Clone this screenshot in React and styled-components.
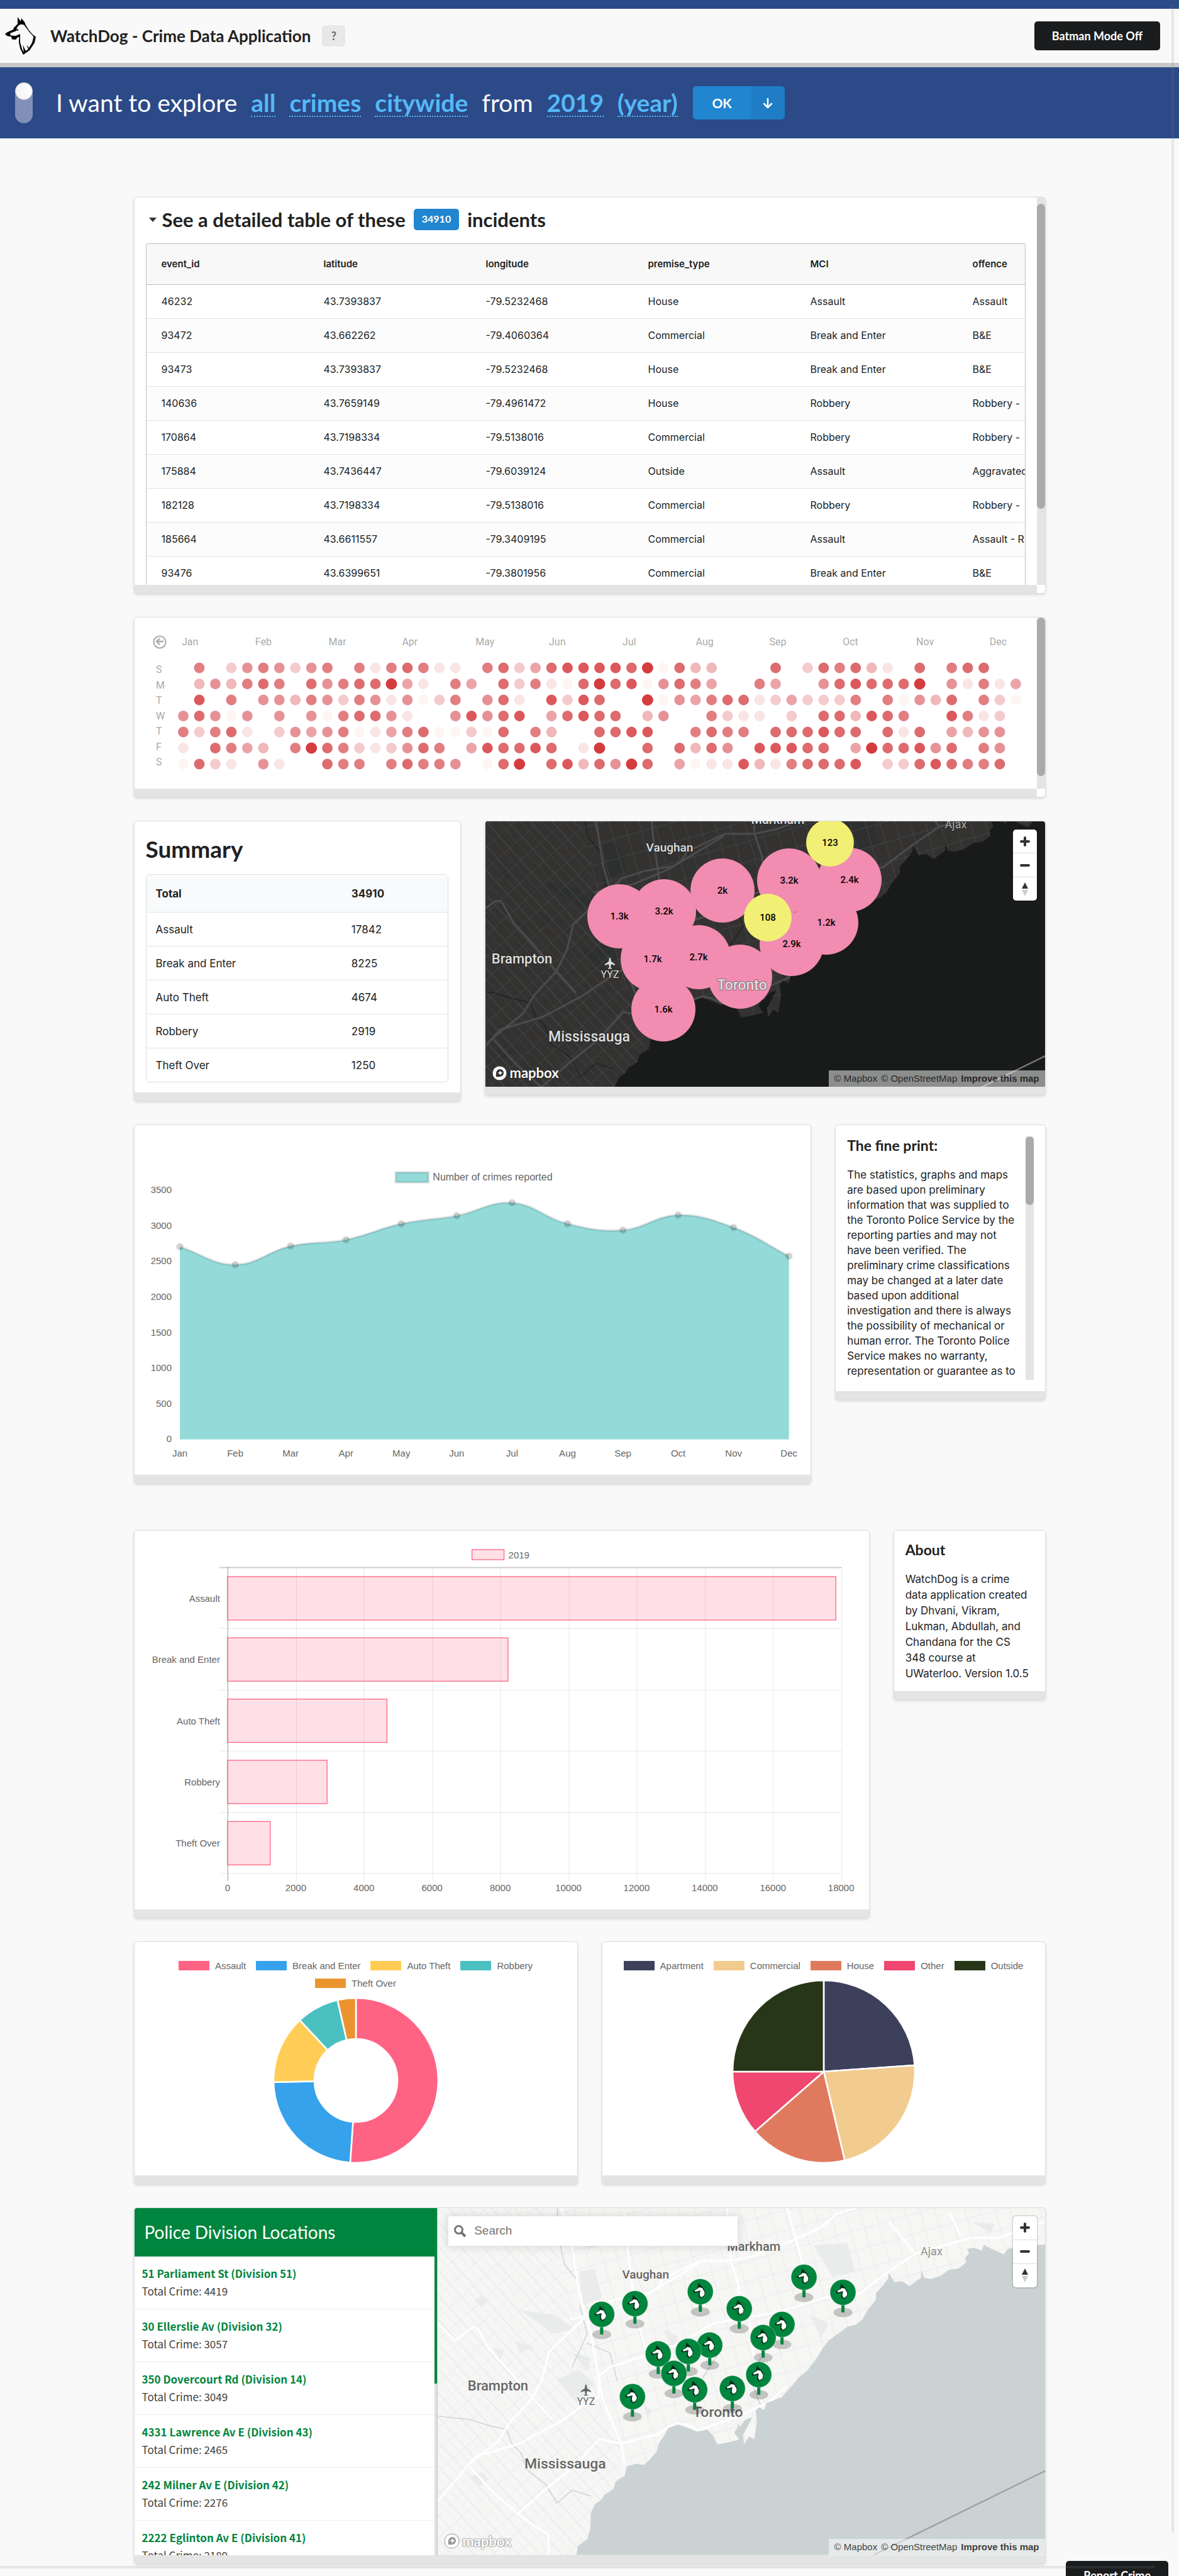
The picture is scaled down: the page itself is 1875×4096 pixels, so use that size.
import React from "react";
import styled, { createGlobalStyle, css } from "styled-components";

const LATO = `Lato, "Open Sans", sans-serif`;
const UI = `Inter, Roboto, sans-serif`;
const CHART = `"Liberation Sans", Arial, sans-serif`;
const MAP = `Roboto, "Noto Sans", sans-serif`;
const SOURCE = `"Noto Sans CJK SC", "Noto Sans", sans-serif`;

const GlobalStyle = createGlobalStyle`
  *, *::before, *::after { box-sizing: border-box; }
  body {
    margin: 0;
    background: #f9f9f9;
    color: #212121;
    font-family: ${LATO};
    font-size: 18px;
    overflow: hidden;
  }
  button, input { font-family: inherit; }
  h1, h2, h3, p, ul { margin: 0; padding: 0; }
`;

/* ---------- page chrome ---------- */

const Page = styled.div`
  position: relative;
  min-height: 100vh;
`;

const TopStrip = styled.div`
  height: 14px;
  background: #2b4a87;
`;

const Header = styled.header`
  display: flex;
  align-items: center;
  justify-content: space-between;
  height: 93px;
  padding: 0 30px 0 8px;
  border-bottom: 7px solid #c8c8c8;
`;

const Brand = styled.div`
  display: flex;
  align-items: center;
`;

const BrandName = styled.h1`
  margin: 0 18px 0 23px;
  font-size: 26px;
  line-height: 34px;
  font-weight: 700;
`;

const HelpButton = styled.button`
  width: 37px;
  height: 34px;
  border: 0;
  border-radius: 5px;
  background: #e8e8e8;
  color: #666;
  font-size: 18px;
  font-weight: 700;
`;

const DarkButton = styled.button`
  height: ${(p) => p.$height}px;
  padding: 0 28px;
  border: 0;
  border-radius: 5px;
  background: #1b1c1d;
  color: #fff;
  font-size: 18px;
  font-weight: 700;
`;

const QueryBar = styled.section`
  display: flex;
  align-items: center;
  height: 113px;
  padding: 0 24px;
  background: #2b4a87;
  color: #fff;
`;

const Toggle = styled.label`
  display: block;
  width: 28px;
  height: 65px;
  margin-right: 37px;
  border-radius: 14px;
  background: #8090b7;

  input {
    appearance: none;
    display: block;
    width: 28px;
    height: 28px;
    margin: 0;
    border-radius: 14px;
    border: 1px solid #d0d0d4;
    background: linear-gradient(90deg, #f2f2f2, #fff);
  }
`;

const Sentence = styled.p`
  display: flex;
  align-items: baseline;
  gap: 22px;
  font-size: 39px;
  line-height: 42px;
`;

const Choice = styled.button`
  padding: 0;
  border: 0;
  border-bottom: 2px dotted #54b9f8;
  background: none;
  color: #54b9f8;
  font-size: 39px;
  line-height: 42px;
  font-weight: 700;
`;

const SplitButton = styled.div`
  display: flex;
  height: 53px;
  margin-left: 24px;
  border-radius: 5px;
  overflow: hidden;

  button {
    display: flex;
    align-items: center;
    justify-content: center;
    width: 93px;
    padding: 0;
    border: 0;
    background: #2185d0;
    color: #fff;
    font-size: 21px;
    font-weight: 700;
  }
  button + button {
    width: 53px;
    background: #1e7dc4;
  }
`;

const Main = styled.main`
  display: flex;
  flex-direction: column;
  gap: 37px;
  max-width: 1450px;
  margin: 93px auto 0;
`;

const Row = styled.div`
  display: grid;
  grid-template-columns: ${(p) => p.$cols};
  gap: 38px;
  align-items: start;
  margin-bottom: ${(p) => p.$after || 0}px;
`;

/* ---------- cards ---------- */

const CardBox = styled.section`
  border: 1px solid #dedede;
  border-radius: 5px;
  background: #fff;
  box-shadow: 0 2px 4px rgba(34, 36, 38, 0.14);
  overflow: hidden;
`;

const CardBand = styled.div`
  height: 13px;
  margin-right: ${(p) => (p.$corner ? 13 : 0)}px;
  background: #e4e4e4;
`;

const ScrollFrame = styled.div`
  display: grid;
  grid-template-columns: minmax(0, 1fr) 13px;
`;

const Track = styled.div`
  padding-top: ${(p) => p.$offset || 0}px;
  background: #e4e4e4;
`;

const Thumb = styled.div`
  height: ${(p) => p.$length}px;
  border-radius: 7px;
  background: #aaa;
`;

function Card({ children, corner }) {
  return (
    <CardBox>
      {children}
      <CardBand $corner={corner} />
    </CardBox>
  );
}

/* ---------- incidents table ---------- */

const IncidentsPane = styled.div`
  height: 616px;
  padding: 18px 18px 0;
  overflow: hidden;
`;

const IncidentsTitle = styled.h2`
  display: flex;
  align-items: center;
  height: 34px;
  margin-bottom: 21px;
  padding-left: 5px;
  font-size: 31px;
  line-height: 34px;
  font-weight: 700;
`;

const Caret = styled.span`
  width: 0;
  height: 0;
  margin-right: 9px;
  border: 6px solid transparent;
  border-top: 7px solid #333;
  border-bottom: 0;
`;

const Badge = styled.span`
  height: 34px;
  margin: 0 13px;
  padding: 0 13px;
  border-radius: 5px;
  background: #2185d0;
  color: #fff;
  font-size: 16px;
  line-height: 32px;
`;

const GridFrame = styled.div`
  border: 1px solid #babfc7;
  border-bottom: 0;
  border-radius: 3px 3px 0 0;
  overflow: hidden;
`;

const DataTable = styled.table`
  width: 1548px;
  table-layout: fixed;
  border-collapse: collapse;
  color: #181d1f;
  font-family: ${UI};
  font-size: 16px;
  white-space: nowrap;

  th, td {
    padding: 0 24px;
    text-align: left;
    border-bottom: 1px solid #dde2eb;
  }
  th {
    height: 64px;
    background: #f8f8f8;
    border-color: #babfc7;
    font-size: 15px;
    font-weight: 600;
  }
  td { height: 54px; }
  tbody tr:nth-child(even) { background: #fcfcfc; }
`;

const COLUMNS = ["event_id", "latitude", "longitude", "premise_type", "MCI", "offence"];
const INCIDENTS = [
  ["46232", "43.7393837", "-79.5232468", "House", "Assault", "Assault"],
  ["93472", "43.662262", "-79.4060364", "Commercial", "Break and Enter", "B&E"],
  ["93473", "43.7393837", "-79.5232468", "House", "Break and Enter", "B&E"],
  ["140636", "43.7659149", "-79.4961472", "House", "Robbery", "Robbery -"],
  ["170864", "43.7198334", "-79.5138016", "Commercial", "Robbery", "Robbery -"],
  ["175884", "43.7436447", "-79.6039124", "Outside", "Assault", "Aggravated"],
  ["182128", "43.7198334", "-79.5138016", "Commercial", "Robbery", "Robbery -"],
  ["185664", "43.6611557", "-79.3409195", "Commercial", "Assault", "Assault - R"],
  ["93476", "43.6399651", "-79.3801956", "Commercial", "Break and Enter", "B&E"],
];

function IncidentsCard() {
  return (
    <Card corner>
      <ScrollFrame>
        <IncidentsPane>
          <IncidentsTitle>
            <Caret />
            See a detailed table of these
            <Badge>34910</Badge>
            incidents
          </IncidentsTitle>
          <GridFrame>
            <DataTable>
              <thead>
                <tr>{COLUMNS.map((c) => <th key={c} scope="col">{c}</th>)}</tr>
              </thead>
              <tbody>
                {INCIDENTS.map((row) => (
                  <tr key={row[0]}>{row.map((cell, i) => <td key={i}>{cell}</td>)}</tr>
                ))}
              </tbody>
            </DataTable>
          </GridFrame>
        </IncidentsPane>
        <Track $offset={10}><Thumb $length={485} /></Track>
      </ScrollFrame>
    </Card>
  );
}

/* ---------- calendar heat map ---------- */

const Drawing = styled.svg`
  display: block;
  width: 100%;
  height: auto;
`;

const MONTHS = ["Jan", "Feb", "Mar", "Apr", "May", "Jun", "Jul", "Aug", "Sep", "Oct", "Nov", "Dec"];

/* One string per weekday, one digit per week: 0 is empty, a is the busiest day. */
const HEAT = [
  ["S", "0703676367" + "0727872207" + "835899998a" + "1844000803" + "8784208078" + "800"],
  ["M", "0464787086" + "788a520750" + "837218a891" + "6875007500" + "689888a062" + "725"],
  ["T", "0907066476" + "3762613706" + "820939800a" + "1657882353" + "3370716480" + "731"],
  ["W", "6861606061" + "7886200696" + "8905898804" + "6007322030" + "8849870097" + "230"],
  ["T", "7378203656" + "7125781131" + "8074008899" + "0078770888" + "9880828054" + "660"],
  ["F", "20875407a8" + "7323687059" + "889802a008" + "0848609998" + "805a889680" + "760"],
  ["S", "1832062008" + "7707877601" + "8a089486a8" + "0512294278" + "8890338987" + "780"],
];
const SHADES = {
  1: "#fdf4f4", 2: "#f9e5e6", 3: "#f3cbcd", 4: "#efb8bb", 5: "#eaa4a7",
  6: "#e69295", 7: "#e27e81", 8: "#de6b6e", 9: "#db585c", a: "#d53c40",
};

function CalendarCard() {
  return (
    <Card corner>
      <ScrollFrame>
        <Drawing viewBox="0 0 1435 272" role="img" aria-label="Crimes per day">
          <g fill="none" stroke="#aaa" strokeWidth="2">
            <circle cx="40" cy="39" r="9.5" />
            <path d="M46 38H35M40 33l-5 5 5 5" strokeWidth="2.4" />
          </g>
          <g fill="#aaa" fontFamily={MAP} fontSize="16">
            {MONTHS.map((m, i) => <text key={m} x={75 + i * 116.8} y="44">{m}</text>)}
            {HEAT.map(([day], i) => <text key={i} x="34" y={88 + i * 24.5}>{day}</text>)}
          </g>
          {HEAT.map(([, weeks], row) =>
            weeks.split("").map((v, col) =>
              v === "0" ? null : (
                <circle
                  key={`${row}-${col}`}
                  cx={77.5 + col * 25.46}
                  cy={80 + row * 25.5}
                  r={v === "a" ? 9 : 8.4}
                  fill={SHADES[v]}
                />
              )
            )
          )}
        </Drawing>
        <Track><Thumb $length={252} /></Track>
      </ScrollFrame>
    </Card>
  );
}

/* ---------- summary ---------- */

const SummaryPane = styled.div`
  padding: 24px 19px 16px 18px;

  h2 {
    margin-bottom: 20px;
    font-size: 37px;
    line-height: 40px;
  }
`;

const SummaryTable = styled.table`
  width: 100%;
  border: 1px solid #dedfdf;
  border-radius: 5px;
  border-spacing: 0;
  font-family: ${UI};
  font-size: 17px;
  overflow: hidden;

  th, td {
    height: 54px;
    padding: 0 15px;
    text-align: left;
    border-top: 1px solid #e4e4e5;
  }
  th:first-child { width: 65%; }
  td:first-child { width: 65%; }
  thead th {
    height: 59px;
    border-top: 0;
    background: #f9fafb;
    font-weight: 700;
  }
`;

const TOTALS = [["Assault", 17842], ["Break and Enter", 8225], ["Auto Theft", 4674], ["Robbery", 2919], ["Theft Over", 1250]];

function SummaryCard() {
  return (
    <Card>
      <SummaryPane>
        <h2>Summary</h2>
        <SummaryTable>
          <thead>
            <tr><th scope="col">Total</th><th scope="col">34910</th></tr>
          </thead>
          <tbody>
            {TOTALS.map(([name, n]) => (
              <tr key={name}><td>{name}</td><td>{n}</td></tr>
            ))}
          </tbody>
        </SummaryTable>
      </SummaryPane>
    </Card>
  );
}

/* ---------- maps ---------- */

const THEMES = {
  dark: { land: "#333231", water: "#191a1a", minor: "#434343", major: "#4b4b4b", park: "#2d302e", creek: "#1d1e1e", text: "#dedede", halo: "#2a2a2a", border: "#777" },
  light: { land: "#f6f6f4", water: "#cad2d3", minor: "#e8ebeb", major: "#ffffff", park: "#eaecec", creek: "#c3ccce", text: "#666", halo: "#f6f6f4", border: "#a0a0a2" },
};

const SHORE =
  "M1214 187L1180 190L1140 197L1116 205L1105 228L1075 207L1052 188L1047 212L1025 200L1008 205L1013 225L1003 240L1005 262L985 288" +
  "L960 292L935 320L910 331L893 325L885 290L886 325L870 342L855 361L835 340L815 345L800 305L798 330L784 360L766 390L765 420L745 458" +
  "L730 500L712 523L690 531L665 560L640 590L625 620L610 660L596 690L583 715L560 745L545 775L530 800L517 825L490 842L475 850L470 880" +
  "L455 868L447 885L450 930L443 1003L430 990L416 1023L413 985L438 910L420 920L405 950L398 935L400 950L390 975L403 1003L375 1015L345 1024L335 990L320 962" +
  "L290 970L262 952L240 940L215 955L205 985L190 1020L185 1052L165 1088L150 1110L130 1105L105 1115L100 1155L75 1180L70 1210L45 1235L38 1255" +
  "L20 1275L10 1310L8 1380L0 1420L-25 1450L-30 1500";
const LAND = `${SHORE}L-420 1500L-420 0L1230 0Z`;

const HIGHWAYS = [
  "M-398 515L-351 588L-310 540Q-298 528 -288 545L-260 625L-208 715L-145 830L-93 920",
  "M-204 930L-145 830L-117 740L-101 635L-45 550L30 440L90 410L165 390Q190 370 200 330L300 255L380 255L440 235L560 160L625 110L660 60L720 30",
  "M-45 500L60 465L150 405L300 262",
  "M-398 1265L-315 1110L-236 1010L-204 930",
  "M-315 1110L-296 1075L-180 1020L-73 930L0 850L30 825L30 740L60 700L130 665L250 600L330 520L400 497L520 465L640 405L720 395L800 300L870 225L1020 158L1090 160L1214 90",
  "M-315 1110L-252 1220L-184 1315L-103 1405L-102 1490",
  "M-184 1315L-109 1210L-37 1120L32 1000L90 1020L190 980L215 950L240 936L265 942L295 965L400 905L480 850L530 780",
  "M-69 30L-37 230L-21 390L10 560L30 740L40 830L90 1020L100 1110",
  "M370 30L380 255L400 350L405 450L430 500L440 640L470 760",
  "M100 60L110 250L130 480L160 660",
  "M530 30L560 200L580 320",
  "M960 50L990 150M800 90L870 225",
];
const CREEKS = [
  "M-398 905L-310 920L-260 945L-215 960L-200 1020L-175 1060L-160 1130L-110 1190L-80 1270L-40 1215L10 1240",
  "M-80 30L-70 200L-60 270L-30 330",
  "M-20 440L0 560L-40 700M0 600L60 640L80 760",
  "M460 660L440 780L460 860",
  "M330 560L350 640L300 760",
];
const PARKS = [
  "M-300 420l20 -20 20 20 -20 30Z M-190 590l50 30 -40 20Z M-180 460l90 20 60 60 -60 20Z M-80 750l60 -40 40 60 -50 80Z",
  "M-310 1160l30 -20 20 30 -30 30Z M-250 620l30 10 -10 40Z M-40 640l50 20 -10 60Z M600 190l90 -10 20 120 -60 20Z M590 480l50 40 -20 60Z",
  "M0 80l30 20 0 90 -30 20Z M200 540l40 30 -10 60Z M150 860l20 20 -10 40Z M-20 300l40 -10 20 120 -50 30Z M1020 90l60 10 -10 40Z",
];

const LABELS = [
  ["Markham", 503, 68, 20, 500],
  ["Vaughan", 331, 112, 19, 500],
  ["Brampton", 96, 290, 22, 500],
  ["Mississauga", 203, 414, 23, 500],
  ["YYZ", 236, 313, 16, 400],
  ["Ajax", 786, 75, 18, 400],
];

const Terrain = ({ theme, id }) => {
  const t = THEMES[theme];
  return (
    <>
      <defs>
        <pattern id={`${id}-east`} width="23" height="31" patternUnits="userSpaceOnUse" patternTransform="rotate(-16)">
          <path d="M0 0H23M0 0V31" stroke={t.minor} strokeWidth="2" />
        </pattern>
        <pattern id={`${id}-west`} width="26" height="26" patternUnits="userSpaceOnUse" patternTransform="rotate(-42)">
          <path d="M0 0H26M0 0V26M12 0V26" stroke={t.minor} strokeWidth="1.5" />
        </pattern>
        <clipPath id={`${id}-land`}>
          <path d={LAND} transform="translate(238 -13) scale(.6 .38)" />
        </clipPath>
      </defs>
      <rect width="967" height="552" fill={t.water} />
      <g clipPath={`url(#${id}-land)`}>
        <rect width="967" height="552" fill={t.land} />
        <g transform="translate(238 -13) scale(.6 .38)" fill={t.park}>
          {PARKS.map((d) => <path key={d} d={d} />)}
        </g>
        <path d="M0 0H175L245 300L290 380V552H0Z" fill={`url(#${id}-west)`} />
        <path d="M175 0H967V552H290V380L245 300Z" fill={`url(#${id}-east)`} />
        <g transform="translate(238 -13) scale(.6 .38)" fill="none" strokeLinejoin="round">
          {CREEKS.map((d) => <path key={d} d={d} stroke={t.creek} strokeWidth="1.2" vectorEffect="non-scaling-stroke" />)}
          {HIGHWAYS.map((d) => <path key={d} d={d} stroke={t.major} strokeWidth="3.2" vectorEffect="non-scaling-stroke" />)}
        </g>
      </g>
      <path d="M967 418L694 552" stroke={t.border} strokeWidth="2.4" />
      <path transform="translate(228 281)" fill={t.text} d="M7 0h2l1 6 6 4v2l-6-2-1 5 2 2v1l-3-1-3 1v-1l2-2-1-5-6 2v-2l6-4z" />
      <g fill={t.text} stroke={t.halo} strokeWidth="2.4" paintOrder="stroke" strokeLinejoin="round" fontFamily={MAP} textAnchor="middle">
        {LABELS.map(([name, x, y, size, weight]) => (
          <text key={name} x={x} y={y} fontSize={size} fontWeight={weight} opacity={name === "Ajax" ? 0.7 : 1}>{name}</text>
        ))}
      </g>
    </>
  );
};

const CityLabel = ({ theme }) => (
  <text
    x="446" y="332" fontSize="23" fontWeight="500" fontFamily={MAP} textAnchor="middle"
    fill={THEMES[theme].text} stroke={theme === "dark" ? "#8a6a78" : THEMES[theme].halo} strokeWidth="2" paintOrder="stroke"
  >
    Toronto
  </text>
);

const MapFrame = styled.div`
  position: relative;
`;

const MapControls = styled.div`
  position: absolute;
  top: 13px;
  right: 13px;
  display: flex;
  flex-direction: column;
  width: 38px;
  border-radius: 5px;
  background: #fff;
  box-shadow: 0 0 0 2px rgba(0, 0, 0, 0.1);

  button {
    display: flex;
    align-items: center;
    justify-content: center;
    height: 37px;
    padding: 0;
    border: 0;
    background: none;
  }
  button + button {
    height: 38px;
    border-top: 1px solid #ddd;
  }
`;

const Attribution = styled.div`
  position: absolute;
  right: 0;
  bottom: 0;
  display: flex;
  gap: 6px;
  height: 26px;
  padding: 0 9px;
  background: rgba(255, 255, 255, 0.5);
  font-family: ${CHART};
  font-size: 15px;
  line-height: 26px;

  a {
    color: rgba(0, 0, 0, 0.75);
    text-decoration: none;
  }
  a:last-child { font-weight: 700; }
`;

const LogoLink = styled.a`
  position: absolute;
  left: 10px;
  bottom: 9px;
  display: flex;
  align-items: center;
  gap: 4px;
  color: #fff;
  font-family: ${LATO};
  font-size: 22px;
  line-height: 26px;
  font-weight: 700;
  text-decoration: none;
  text-shadow: ${(p) => (p.$outlined ? "0 0 2px #888, 0 0 2px #888, 0 0 1px #888, 0 0 1px #888" : "0 0 2px #000")};
`;

function MapOverlay({ outlined }) {
  return (
    <>
      <MapControls>
        <button type="button" aria-label="Zoom in">
          <svg width="16" height="16" stroke="#333" strokeWidth="4" strokeLinecap="round"><path d="M8 2v12M2 8h12" /></svg>
        </button>
        <button type="button" aria-label="Zoom out">
          <svg width="16" height="16" stroke="#333" strokeWidth="4" strokeLinecap="round"><path d="M2 8h12" /></svg>
        </button>
        <button type="button" aria-label="Reset bearing">
          <svg width="12" height="24"><path d="M6 1l5 10H1z" fill="#333" /><path d="M6 23l5-10H1z" fill="#ccc" /></svg>
        </button>
      </MapControls>
      <LogoLink href="#mapbox" $outlined={outlined}>
        <svg width="25" height="25" viewBox="0 0 25 25">
          <circle cx="12.5" cy="12.5" r="11.5" fill="#fff" stroke={outlined ? "#999" : "#333"} />
          <path d="M7 18c-1-7 1-12 6-12 3 0 6 2 6 6 0 5-5 7-12 6z" fill={outlined ? "#999" : "#333"} />
          <path d="M13.5 8l1.2 2.8 2.8 1.2-2.8 1.2-1.2 2.8-1.2-2.8L9.500 12l2.800-1.200z" fill="#fff" />
        </svg>
        mapbox
      </LogoLink>
      <Attribution>
        <a href="#mapbox">© Mapbox</a>
        <a href="#osm">© OpenStreetMap</a>
        <a href="#improve">Improve this map</a>
      </Attribution>
    </>
  );
}

const CLUSTERS = [
  [251, 215, "1.3k"], [322, 207, "3.2k"], [415, 174, "2k"], [521, 158, "3.2k"], [617, 157, "2.4k"],
  [580, 225, "1.2k"], [525, 259, "2.9k"], [304, 283, "1.7k"], [377, 280, "2.7k"], [443, 311, ""],
  [321, 363, "1.6k"], [586, 98, "123"], [487, 217, "108"],
];

function ClusterMapCard() {
  return (
    <Card>
      <MapFrame>
        <Drawing viewBox="38 64 890 422" role="img" aria-label="Crime clusters around Toronto">
          <Terrain theme="dark" id="clusters" />
          {CLUSTERS.map(([x, y, n]) => (
            <circle key={`${x}${n}`} cx={x} cy={y} r={n.endsWith("k") || !n ? 51 : 38} fill={n.endsWith("k") || !n ? "#f28cb1" : "#f1f075"} />
          ))}
          <g fontFamily={MAP} fontSize="15" fontWeight="500" textAnchor="middle">
            {CLUSTERS.map(([x, y, n]) => <text key={`${x}${n}`} x={x} y={y + 5}>{n}</text>)}
          </g>
          <CityLabel theme="dark" />
        </Drawing>
        <MapOverlay />
      </MapFrame>
    </Card>
  );
}

/* ---------- charts ---------- */

const REPORTED = [2707, 2456, 2717, 2807, 3031, 3145, 3325, 3031, 2941, 3152, 2978, 2577];

/* Smooth curve through the points, with a tension of 0.4. */
function spline(points) {
  const controls = points.map((p, i) => {
    const prev = points[i - 1] || p;
    const next = points[i + 1] || p;
    const a = Math.hypot(p[0] - prev[0], p[1] - prev[1]);
    const b = Math.hypot(next[0] - p[0], next[1] - p[1]);
    const fa = (0.4 * a) / (a + b);
    const fb = (0.4 * b) / (a + b);
    const dx = next[0] - prev[0];
    const dy = next[1] - prev[1];
    return [[p[0] - fa * dx, p[1] - fa * dy], [p[0] + fb * dx, p[1] + fb * dy]];
  });
  return points.reduce(
    (d, p, i) => (i === 0 ? `M${p}` : `${d}C${controls[i - 1][1]} ${controls[i][0]} ${p}`),
    ""
  );
}

function LineCard() {
  const points = REPORTED.map((v, i) => [72 + i * 88, 499.5 - v * 0.1131]);
  const line = spline(points);
  return (
    <Card>
      <Drawing viewBox="0 0 1075 556" role="img" aria-label="Number of crimes reported per month">
        <path d={`${line}V499.5H72Z`} fill="#94dad9" />
        <path d={line} fill="none" stroke="rgba(0,0,0,.1)" strokeWidth="4" />
        {points.map(([x, y]) => (
          <circle key={x} cx={x} cy={y} r="4" fill="rgba(0,0,0,.1)" stroke="rgba(0,0,0,.12)" strokeWidth="4" />
        ))}
        <rect x="415" y="75" width="52" height="16" fill="#94dad9" stroke="rgba(0,0,0,.1)" strokeWidth="4" />
        <g fill="#666" fontFamily={CHART} fontSize="15">
          <text x="474" y="88" fontSize="16">Number of crimes reported</text>
          {[0, 500, 1000, 1500, 2000, 2500, 3000, 3500].map((v) => (
            <text key={v} x="59" y={504 - v * 0.1131} textAnchor="end">{v}</text>
          ))}
          {MONTHS.map((m, i) => <text key={m} x={72 + i * 88} y="527" textAnchor="middle">{m}</text>)}
        </g>
      </Drawing>
    </Card>
  );
}

function BarCard() {
  return (
    <Card>
      <Drawing viewBox="0 0 1169 602" role="img" aria-label="Crimes by type, 2019">
        <g stroke="rgba(0,0,0,.1)">
          {[0, 1, 2, 3, 4, 5].map((i) => (
            <path key={i} d={`M135 ${58.5 + Math.round(i * 97.4)}H1125`} strokeWidth={i ? 1 : 2} stroke={i ? undefined : "rgba(0,0,0,.2)"} />
          ))}
          {[0, 1, 2, 3, 4, 5, 6, 7, 8, 9].map((i) => (
            <path key={i} d={`M${148.5 + Math.round(i * 108.5)} 58V557`} stroke={i ? undefined : "rgba(0,0,0,.4)"} />
          ))}
        </g>
        <g fill="rgba(255,99,132,.2)" stroke="#ff6384" strokeWidth="1.3">
          <rect x="537" y="30" width="51" height="16" />
          {TOTALS.map(([name, n], i) => (
            <rect key={name} x="148" y={73 + i * 97.4} width={n * 0.05426} height="69" />
          ))}
        </g>
        <g fill="#666" fontFamily={CHART} fontSize="15">
          <text x="595" y="44">2019</text>
          {TOTALS.map(([name], i) => <text key={name} x="136" y={113 + i * 97.4} textAnchor="end">{name}</text>)}
          {[0, 1, 2, 3, 4, 5, 6, 7, 8, 9].map((i) => (
            <text key={i} x={148 + i * 108.5} y="573" textAnchor="middle">{i * 2000}</text>
          ))}
        </g>
      </Drawing>
    </Card>
  );
}

const Legend = styled.ul`
  display: flex;
  flex-wrap: wrap;
  justify-content: center;
  column-gap: 16px;
  list-style: none;
  padding: 24px ${(p) => p.$inset}px 0;
  color: #666;
  font-family: ${CHART};
  font-size: 15px;
  line-height: 28px;

  li {
    display: flex;
    align-items: center;
    gap: 9px;
  }
`;

const Swatch = styled.span`
  width: 49px;
  height: 15px;
  background: ${(p) => p.$color};
`;

const PiePane = styled.div`
  height: 371px;
  text-align: center;

  svg {
    margin-top: ${(p) => p.$top}px;
  }
`;

function slices(data, cx, cy, outer, inner) {
  const total = data.reduce((s, d) => s + d[1], 0);
  let angle = 0;
  return data.map(([name, n, color]) => {
    const from = angle;
    angle += (n / total) * Math.PI * 2;
    const at = (a, r) => `${cx + r * Math.sin(a)} ${cy - r * Math.cos(a)}`;
    const big = angle - from > Math.PI ? 1 : 0;
    const d = `M${at(from, outer)}A${outer} ${outer} 0 ${big} 1 ${at(angle, outer)}L${at(angle, inner)}A${inner} ${inner} 0 ${big} 0 ${at(from, inner)}Z`;
    return <path key={name} d={d} fill={color} stroke="#fff" strokeWidth="2.6" />;
  });
}

const BY_TYPE = [
  ["Assault", 17842, "#ff6384"], ["Break and Enter", 8225, "#36a2eb"], ["Auto Theft", 4674, "#ffcd56"],
  ["Robbery", 2919, "#4bc0c0"], ["Theft Over", 1250, "#eb942f"],
];
const BY_PREMISE = [
  ["Apartment", 239, "#3d405b"], ["Commercial", 224, "#f2cc8f"], ["House", 173, "#e07a5f"],
  ["Other", 114, "#ef476f"], ["Outside", 250, "#283618"],
];

function PieCard({ data, radius, hole, inset, top, label }) {
  const size = radius * 2 + 4;
  return (
    <Card>
      <PiePane $top={top}>
        <Legend $inset={inset}>
          {data.map(([name, , color]) => <li key={name}><Swatch $color={color} />{name}</li>)}
        </Legend>
        <svg width={size} height={size} role="img" aria-label={label}>
          {slices(data, radius + 2, radius + 2, radius, hole)}
        </svg>
      </PiePane>
    </Card>
  );
}

/* ---------- notes ---------- */

const Note = styled.div`
  display: grid;
  grid-template-columns: minmax(0, 1fr) auto;
  padding: ${(p) => (p.$scroll ? "18px" : "16px 24px 15px 18px")};
`;

const NoteText = styled.div`
  height: ${(p) => (p.$scroll ? "387px" : "auto")};
  padding-right: ${(p) => (p.$scroll ? 6 : 0)}px;
  overflow: hidden;

  h3 {
    margin-bottom: 21px;
    font-size: 23px;
    line-height: 28px;
    font-weight: 700;
  }
  p {
    font-family: ${UI};
    font-size: 17px;
    line-height: ${(p) => (p.$scroll ? 24 : 25)}px;
  }
`;

const NoteTrack = styled(Track)`
  width: 13px;
`;

function FinePrintCard() {
  return (
    <Card>
      <Note $scroll>
        <NoteText $scroll>
          <h3>The fine print:</h3>
          <p>
            The statistics, graphs and maps are based upon preliminary information that was supplied to the Toronto
            Police Service by the reporting parties and may not have been verified. The preliminary crime
            classifications may be changed at a later date based upon additional investigation and there is always the
            possibility of mechanical or human error. The Toronto Police Service makes no warranty, representation or
            guarantee as to
          </p>
        </NoteText>
        <NoteTrack><Thumb $length={109} /></NoteTrack>
      </Note>
    </Card>
  );
}

function AboutCard() {
  return (
    <Card>
      <Note>
        <NoteText>
          <h3>About</h3>
          <p>
            WatchDog is a crime data application created by Dhvani, Vikram, Lukman, Abdullah, and Chandana for the CS
            348 course at UWaterloo. Version 1.0.5
          </p>
        </NoteText>
      </Note>
    </Card>
  );
}

/* ---------- police divisions ---------- */

const DivisionPane = styled.div`
  display: grid;
  grid-template-columns: 1fr 2fr;
`;

const DivisionSide = styled.div`
  display: flex;
  flex-direction: column;
  height: 552px;
  border-right: 1px solid #c4c4c4;
  overflow: hidden;
`;

const DivisionTitle = styled.h2`
  flex: none;
  height: 77px;
  padding: 0 16px;
  background: #00853e;
  color: #fff;
  font-size: 28px;
  line-height: 76px;
  font-weight: 400;
`;

const DivisionScroll = styled.div`
  display: grid;
  grid-template-columns: minmax(0, 1fr) 4px;
  flex: 1;
  min-height: 0;
  overflow: hidden;
`;

const DivisionTrack = styled.div`
  background: linear-gradient(#00853e 202px, #e0e0e0 202px);
`;

const DivisionList = styled.ul`
  list-style: none;
  overflow: hidden;
  font-family: ${SOURCE};
  font-size: 17px;
  line-height: 28px;

  li {
    height: 84px;
    padding: 13px 12px 0;
    border-bottom: 1px solid #eee;
    color: #404040;
  }
  a {
    display: block;
    color: #00853e;
    font-weight: 700;
    text-decoration: none;
  }
`;

const SearchBox = styled.label`
  position: absolute;
  top: 13px;
  left: 17px;
  display: flex;
  align-items: center;
  gap: 12px;
  width: 460px;
  height: 47px;
  padding: 0 8px;
  background: #fff;
  box-shadow: 0 0 13px 3px rgba(0, 0, 0, 0.1);

  input {
    flex: 1;
    min-width: 0;
    padding: 0;
    border: 0;
    outline: 0;
    background: none;
    font-family: ${CHART};
    font-size: 19px;
  }
  input::placeholder { color: #757575; }
`;

const DIVISIONS = [
  ["51 Parliament St (Division 51)", 4419],
  ["30 Ellerslie Av (Division 32)", 3057],
  ["350 Dovercourt Rd (Division 14)", 3049],
  ["4331 Lawrence Av E (Division 43)", 2465],
  ["242 Milner Av E (Division 42)", 2276],
  ["2222 Eglinton Av E (Division 41)", 2189],
];

const PINS = [
  [583, 110], [645, 134], [418, 133], [314, 152], [480, 160], [261, 169], [548, 185], [518, 206],
  [433, 218], [399, 228], [351, 232], [376, 263], [511, 265], [469, 287], [409, 289], [310, 300],
];

const Pin = ({ x, y }) => (
  <g transform={`translate(${x} ${y})`}>
    <ellipse cy="32" rx="15" ry="7.5" fill="#000" opacity=".2" />
    <path d="M0 15V32" stroke="#00853e" strokeWidth="5" />
    <circle r="20.5" fill="#00853e" stroke="#fff" strokeOpacity=".35" />
    <path d="M-3 -14L4 -7L8 0L7 6L1 11L-3 7L-2 0L-9 2L-12 -1L-5 -5Z" fill="#0a2a18" />
    <path d="M-2 -7L3 -6L7 1L6 6L1 9L-1 5L0 -2L-8 0L-9 -2L-4 -5Z" fill="#fff" />
  </g>
);

function DivisionsCard() {
  return (
    <Card>
      <DivisionPane>
        <DivisionSide>
          <DivisionTitle>Police Division Locations</DivisionTitle>
          <DivisionScroll>
            <DivisionList>
              {DIVISIONS.map(([name, n]) => (
                <li key={name}><a href="#division">{name}</a>Total Crime: {n}</li>
              ))}
            </DivisionList>
            <DivisionTrack />
          </DivisionScroll>
        </DivisionSide>
        <MapFrame>
          <Drawing viewBox="0 0 966 552" role="img" aria-label="Police divisions in Toronto">
            <Terrain theme="light" id="divisions" />
            <CityLabel theme="light" />
            {PINS.map(([x, y]) => <Pin key={x} x={x} y={y} />)}
          </Drawing>
          <SearchBox>
            <svg width="21" height="21" fill="none" stroke="#757575" strokeWidth="3">
              <circle cx="8.5" cy="8.5" r="6" /><path d="M13 13l6 6" strokeWidth="4" />
            </svg>
            <input type="text" placeholder="Search" aria-label="Search" />
          </SearchBox>
          <MapOverlay outlined />
        </MapFrame>
      </DivisionPane>
    </Card>
  );
}

/* ---------- floating parts ---------- */

const rail = css`
  position: fixed;
  background: rgba(128, 128, 128, 0.16);
  pointer-events: none;
`;
const RightRail = styled.div`
  ${rail}
  top: 8px;
  right: 8px;
  bottom: 69px;
  width: 4px;
`;
const BottomRail = styled.div`
  ${rail}
  left: 0;
  right: 38px;
  bottom: 12px;
  height: 4px;
`;
const ReportSlot = styled.div`
  position: fixed;
  right: 17px;
  bottom: -22px;
`;

function DogLogo() {
  return (
    <svg width="49" height="60" viewBox="0 0 49 60" aria-hidden="true">
      <path
        fillRule="evenodd"
        d="M20 0L25 7L26 2L31 8L33 13L38 21L44 28L49 31.5L47 41L39 53L29 60L24 50L22 40L22.5 31.5L20 32.5L17 36L11 35.5L10 31.5L3 30L0 27L4 24L13 20L14 17L20 11ZM26 11.8C23 12 21 14 19 17L18 22L8 26L9 29.5L17 30L24 27L24 40L27 51L30 56L28 44L33 54L37 51L34 44L38 49L43 41L45.5 31.5L38 23L32 15C30 12 28 11.5 26 11.8Z"
      />
      <path d="M17 21l4-2v3z" />
    </svg>
  );
}

export default function App() {
  return (
    <Page>
      <GlobalStyle />
      <TopStrip />
      <Header>
        <Brand>
          <DogLogo />
          <BrandName>WatchDog - Crime Data Application</BrandName>
          <HelpButton type="button">?</HelpButton>
        </Brand>
        <DarkButton type="button" $height={46}>Batman Mode Off</DarkButton>
      </Header>
      <QueryBar>
        <Toggle><input type="checkbox" aria-label="Show advanced filters" /></Toggle>
        <Sentence>
          <span>I want to explore</span>
          <Choice type="button">all</Choice>
          <Choice type="button">crimes</Choice>
          <Choice type="button">citywide</Choice>
          <span>from</span>
          <Choice type="button">2019</Choice>
          <Choice type="button">(year)</Choice>
        </Sentence>
        <SplitButton>
          <button type="button">OK</button>
          <button type="button" aria-label="Scroll down">
            <svg width="18" height="18" fill="none" stroke="#fff" strokeWidth="2.6" strokeLinecap="round" strokeLinejoin="round">
              <path d="M9 2v14M3 10l6 6 6-6" />
            </svg>
          </button>
        </SplitButton>
      </QueryBar>
      <Main>
        <IncidentsCard />
        <CalendarCard />
        <Row $cols="520fr 892fr"><SummaryCard /><ClusterMapCard /></Row>
        <Row $cols="1077fr 334fr" $after={37}><LineCard /><FinePrintCard /></Row>
        <Row $cols="1171fr 242fr"><BarCard /><AboutCard /></Row>
        <Row $cols="1fr 1fr">
          <PieCard data={BY_TYPE} radius={131} hole={66} inset={60} top={7} label="Crimes by type" />
          <PieCard data={BY_PREMISE} radius={145} hole={0} inset={10} top={7} label="Crimes by premise" />
        </Row>
        <DivisionsCard />
      </Main>
      <ReportSlot>
        <DarkButton type="button" $height={46}>Report Crime</DarkButton>
      </ReportSlot>
      <RightRail />
      <BottomRail />
    </Page>
  );
}
